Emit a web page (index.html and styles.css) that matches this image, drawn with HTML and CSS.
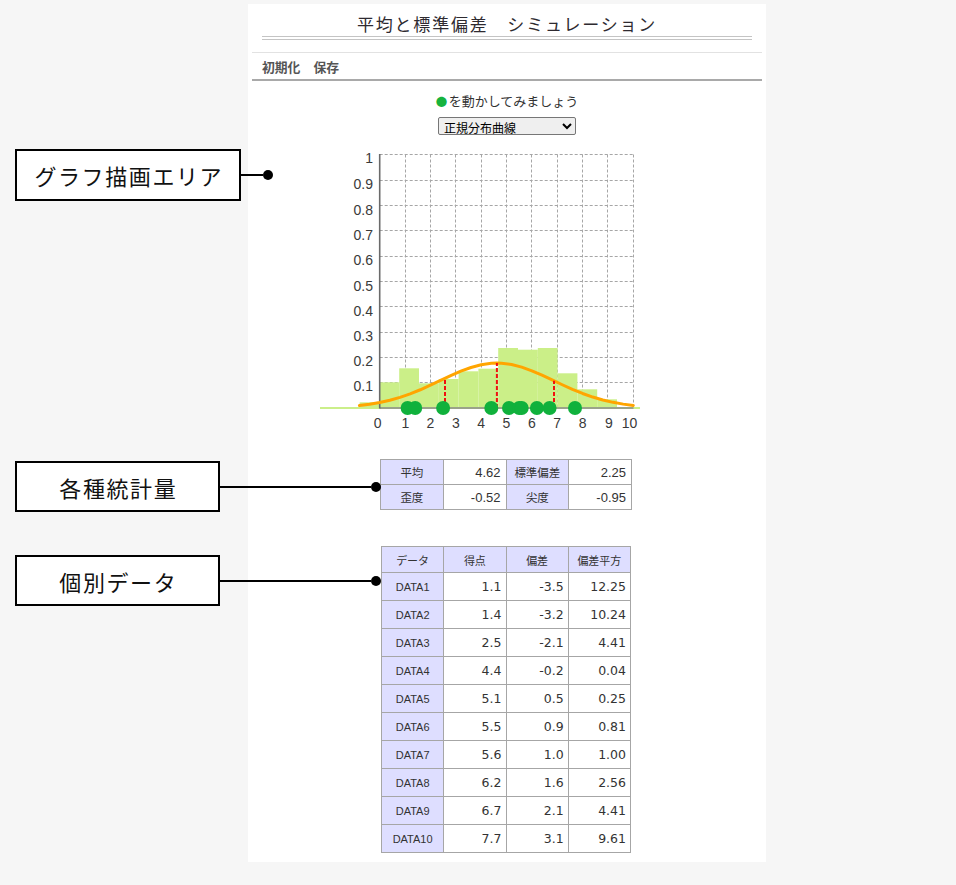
FILE: index.html
```html
<!DOCTYPE html>
<html lang="ja">
<head>
<meta charset="utf-8">
<title>平均と標準偏差 シミュレーション</title>
<link rel="stylesheet" href="styles.css">
</head>
<body>
<div class="page">
  <aside class="notes">
    <div class="note note-graph"><div class="note-box">グラフ描画エリア</div><div class="note-line"></div><div class="note-dot"></div></div>
    <div class="note note-stats"><div class="note-box">各種統計量</div><div class="note-line"></div><div class="note-dot"></div></div>
    <div class="note note-data"><div class="note-box">個別データ</div><div class="note-line"></div><div class="note-dot"></div></div>
  </aside>
  <main class="panel">
    <h1 class="title">平均と標準偏差　シミュレーション</h1>
    <nav class="menu"><span>初期化</span><span>保存</span></nav>
    <p class="hint"><span class="dot">●</span>を動かしてみましょう</p>
    <select class="mode"><option>正規分布曲線</option><option>ヒストグラム</option></select>
    <svg class="chart" viewBox="0 0 518 292" width="518" height="292">
      <path class="grid" d="M157.5 14.5V268M182.5 14.5V268M207.5 14.5V268M233.5 14.5V268M258.5 14.5V268M283.5 14.5V268M309.5 14.5V268M334.5 14.5V268M359.5 14.5V268M385.5 14.5V268M131.7 242.5H385.5M131.7 217.5H385.5M131.7 192.5H385.5M131.7 166.5H385.5M131.7 141.5H385.5M131.7 116.5H385.5M131.7 90.5H385.5M131.7 65.5H385.5M131.7 40.5H385.5M131.7 14.5H385.5"/>
      <line class="base-green" x1="72" y1="268" x2="392" y2="268"/>
      <g class="bars">
        <rect x="111.6" y="262.3" width="19.8" height="5.7"/>
        <rect x="131.4" y="242.3" width="19.8" height="25.7"/>
        <rect x="151.2" y="228.3" width="19.8" height="39.7"/>
        <rect x="171" y="243.3" width="19.8" height="24.7"/>
        <rect x="190.8" y="239" width="19.8" height="29"/>
        <rect x="210.6" y="231.3" width="19.8" height="36.7"/>
        <rect x="230.4" y="228.7" width="19.8" height="39.3"/>
        <rect x="250.2" y="208" width="19.8" height="60"/>
        <rect x="270" y="209.7" width="19.8" height="58.3"/>
        <rect x="289.8" y="208" width="19.8" height="60"/>
        <rect x="309.6" y="233.3" width="19.8" height="34.7"/>
        <rect x="329.4" y="249.3" width="19.8" height="18.7"/>
        <rect x="349.2" y="259.3" width="19.8" height="8.7"/>
      </g>
      <line class="axis-x" x1="131.7" y1="268" x2="385.5" y2="268"/>
      <line class="axis-y" x1="131.7" y1="14" x2="131.7" y2="268.5"/>
      <polyline class="curve" points="111.41,265.53 121.56,264.27 131.7,262.54 141.84,260.27 151.99,257.37 162.13,253.85 172.28,249.76 182.42,245.20 192.56,240.40 202.71,235.62 212.85,231.20 222.99,227.48 233.14,224.76 243.28,223.30 248.86,223.09 253.43,223.23 263.57,224.56 273.72,227.15 283.86,230.79 294.0,235.16 304.15,239.91 314.29,244.73 324.44,249.32 334.58,253.47 344.72,257.05 354.87,260.00 365.01,262.34 375.16,264.12 385.3,265.43"/>
      <g class="sd">
        <line x1="197" y1="268" x2="197" y2="238.3"/>
        <line x1="248.9" y1="268" x2="248.9" y2="223.1"/>
        <line x1="306" y1="268" x2="306" y2="240.7"/>
      </g>
      <g class="pts">
        <circle cx="159.6" cy="268" r="7"/>
        <circle cx="167.2" cy="268" r="7"/>
        <circle cx="195.1" cy="268" r="7"/>
        <circle cx="243.3" cy="268" r="7"/>
        <circle cx="261" cy="268" r="7"/>
        <circle cx="271.2" cy="268" r="7"/>
        <circle cx="273.7" cy="268" r="7"/>
        <circle cx="288.9" cy="268" r="7"/>
        <circle cx="301.6" cy="268" r="7"/>
        <circle cx="327" cy="268" r="7"/>
      </g>
      <g class="ylab">
        <text x="125" y="23">1</text>
        <text x="125" y="49">0.9</text>
        <text x="125" y="74.5">0.8</text>
        <text x="125" y="100">0.7</text>
        <text x="125" y="125">0.6</text>
        <text x="125" y="150.5">0.5</text>
        <text x="125" y="175.5">0.4</text>
        <text x="125" y="201">0.3</text>
        <text x="125" y="226">0.2</text>
        <text x="125" y="251">0.1</text>
      </g>
      <g class="xlab">
        <text x="129.7" y="287.5">0</text>
        <text x="157.5" y="287.5">1</text>
        <text x="182.5" y="287.5">2</text>
        <text x="207.8" y="287.5">3</text>
        <text x="233.1" y="287.5">4</text>
        <text x="258.5" y="287.5">5</text>
        <text x="283.9" y="287.5">6</text>
        <text x="309.2" y="287.5">7</text>
        <text x="334.6" y="287.5">8</text>
        <text x="361" y="287.5">9</text>
        <text x="381.5" y="287.5">10</text>
      </g>
    </svg>
    <table class="stats">
      <tr><th>平均</th><td>4.62</td><th>標準偏差</th><td>2.25</td></tr>
      <tr><th>歪度</th><td>-0.52</td><th>尖度</th><td>-0.95</td></tr>
    </table>
    <table class="data">
      <tr class="head"><th>データ</th><th>得点</th><th>偏差</th><th>偏差平方</th></tr>
      <tr><th>DATA1</th><td>1.1</td><td>-3.5</td><td>12.25</td></tr>
      <tr><th>DATA2</th><td>1.4</td><td>-3.2</td><td>10.24</td></tr>
      <tr><th>DATA3</th><td>2.5</td><td>-2.1</td><td>4.41</td></tr>
      <tr><th>DATA4</th><td>4.4</td><td>-0.2</td><td>0.04</td></tr>
      <tr><th>DATA5</th><td>5.1</td><td>0.5</td><td>0.25</td></tr>
      <tr><th>DATA6</th><td>5.5</td><td>0.9</td><td>0.81</td></tr>
      <tr><th>DATA7</th><td>5.6</td><td>1.0</td><td>1.00</td></tr>
      <tr><th>DATA8</th><td>6.2</td><td>1.6</td><td>2.56</td></tr>
      <tr><th>DATA9</th><td>6.7</td><td>2.1</td><td>4.41</td></tr>
      <tr><th>DATA10</th><td>7.7</td><td>3.1</td><td>9.61</td></tr>
    </table>
  </main>
</div>
</body>
</html>
```
FILE: styles.css
```css
* { box-sizing: border-box; }
html, body { margin: 0; }
body {
  background: #f6f6f6;
  font-family: "Noto Sans CJK JP", "Liberation Sans", sans-serif;
  color: #333;
}
.page {
  display: grid;
  grid-template-columns: 248px 518px;
  align-items: start;
  padding-top: 4px;
}

/* callouts */
.notes { display: flex; flex-direction: column; }
.note {
  display: flex;
  align-items: center;
  margin-left: 15px;
  width: max-content;
  position: relative;
  z-index: 2;
}
.note-box {
  display: flex;
  align-items: center;
  justify-content: center;
  width: 205px;
  height: 51px;
  border: 2px solid #000;
  background: #fff;
  color: #111;
  font-size: 22px;
  letter-spacing: 1.6px;
  padding-left: 1.6px;
}
.note-line { width: 151px; height: 2px; background: #000; }
.note-dot { width: 10px; height: 10px; border-radius: 50%; background: #000; }
.note-graph { margin-top: 145px; }
.note-graph .note-box { width: 226px; height: 52px; }
.note-graph .note-line { width: 22px; }
.note-stats { margin-top: 260px; }
.note-data { margin-top: 43px; }

/* panel */
.panel { background: #fff; height: 858px; }
.title {
  margin: 0 14px;
  padding-top: 8px;
  font-size: 17px;
  line-height: 24px;
  font-weight: normal;
  letter-spacing: 1.8px;
  text-align: center;
  color: #2e2a30;
  border-bottom: 4px double #c4c4c4;
}
.menu {
  margin: 12px 4px 0;
  height: 29px;
  border-top: 1px solid #e2e2e2;
  border-bottom: 2px solid #a9a9a9;
  display: flex;
  align-items: center;
  gap: 13px;
  padding-left: 10px;
  font-size: 12.8px;
  font-weight: bold;
  color: #555;
}
.hint {
  margin: 11px 0 0;
  height: 18px;
  text-align: center;
  font-size: 13px;
  line-height: 18px;
  color: #333;
}
.hint .dot {
  color: #16b33e;
  font-size: 11.5px;
  margin-right: 1.5px;
}
.mode {
  display: block;
  margin: 7px auto 0;
  width: 138px;
  height: 18px;
  padding: 0 1px;
  border-radius: 2px;
  font-family: "Noto Sans CJK JP", sans-serif;
  font-size: 12px;
  color: #000;
}

/* chart */
.chart { display: block; margin-top: 5px; }
.chart .grid { fill: none; stroke: #a6a6a6; stroke-width: 1; stroke-dasharray: 3 2; }
.chart .base-green { stroke: #cbef8a; stroke-width: 2; }
.chart .bars rect { fill: #cbef88; }
.chart .axis-x { stroke: #8a8a8a; stroke-width: 1.5; }
.chart .axis-y { stroke: #6a6a6a; stroke-width: 1.6; }
.chart .curve { fill: none; stroke: #ffa500; stroke-width: 3; stroke-linejoin: round; stroke-linecap: round; }
.chart .sd line { stroke: #f01010; stroke-width: 2; stroke-dasharray: 4 2; }
.chart .pts circle { fill: #10b13c; }
.chart text { font-family: "Liberation Sans", Arial, sans-serif; font-size: 14px; fill: #3a3a3a; }
.chart .ylab text { text-anchor: end; }
.chart .xlab text { text-anchor: middle; }

/* tables */
.stats, .data {
  border-collapse: collapse;
  table-layout: fixed;
}
.stats th, .stats td, .data th, .data td {
  border: 1px solid #a6a6a6;
  padding: 0;
  font-weight: normal;
}
.stats { width: 252px; margin: 27px 0 0 132px; }
.stats th, .stats td { height: 25px; }
.stats th {
  background: #dedeff;
  font-size: 11.5px;
  text-align: center;
  color: #333;
}
.stats td {
  font-family: "Liberation Sans", Arial, sans-serif;
  font-size: 13px;
  text-align: right;
  padding-right: 5px;
  color: #333;
}
.data { width: 250px; margin: 36px 0 0 133px; }
.data th, .data td { height: 28px; }
.data .head th { height: 26px; font-size: 11px; }
.data th {
  background: #dedeff;
  text-align: center;
  font-size: 11px;
  color: #333;
}
.data tr:not(.head) th { font-family: "Liberation Sans", Arial, sans-serif; }
.data td {
  font-family: "DejaVu Sans", sans-serif;
  font-size: 12.5px;
  text-align: right;
  padding-right: 4px;
  color: #333;
}
```
